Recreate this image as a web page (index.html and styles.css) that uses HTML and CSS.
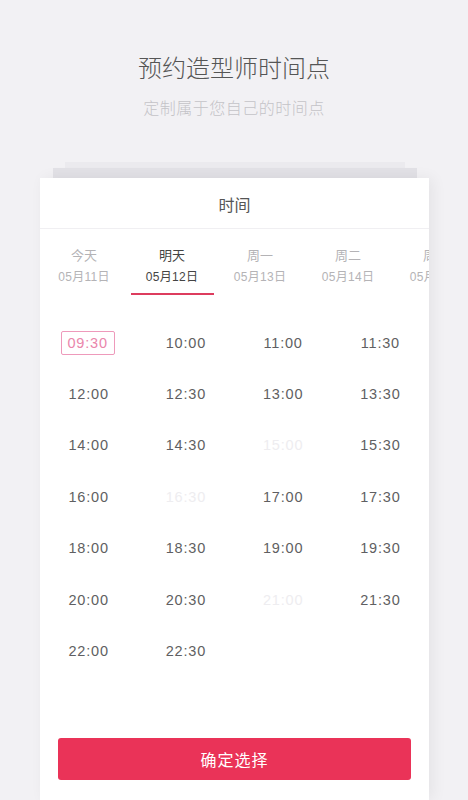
FILE: index.html
```html
<!DOCTYPE html>
<html lang="zh-CN">
<head>
  <meta charset="UTF-8">
  <meta name="viewport" content="width=device-width, initial-scale=1.0">
  <title>预约造型师时间点</title>
  <link rel="stylesheet" href="styles.css">
</head>
<body>
  <div class="page">
    <h1 class="title">预约造型师时间点</h1>
    <p class="subtitle">定制属于您自己的时间点</p>

    <div class="stack">
      <div class="layer layer-back"></div>
      <div class="layer layer-mid"></div>
      <div class="card">
        <div class="card-head">时间</div>

        <div class="tabs">
          <div class="tab"><span class="day">今天</span><span class="date">05月11日</span></div>
          <div class="tab active"><span class="day">明天</span><span class="date">05月12日</span></div>
          <div class="tab"><span class="day">周一</span><span class="date">05月13日</span></div>
          <div class="tab"><span class="day">周二</span><span class="date">05月14日</span></div>
          <div class="tab"><span class="day">周三</span><span class="date">05月15日</span></div>
        </div>

        <div class="slots">
          <div class="slot"><span class="selected">09:30</span></div>
          <div class="slot">10:00</div>
          <div class="slot">11:00</div>
          <div class="slot">11:30</div>
          <div class="slot">12:00</div>
          <div class="slot">12:30</div>
          <div class="slot">13:00</div>
          <div class="slot">13:30</div>
          <div class="slot">14:00</div>
          <div class="slot">14:30</div>
          <div class="slot disabled">15:00</div>
          <div class="slot">15:30</div>
          <div class="slot">16:00</div>
          <div class="slot disabled">16:30</div>
          <div class="slot">17:00</div>
          <div class="slot">17:30</div>
          <div class="slot">18:00</div>
          <div class="slot">18:30</div>
          <div class="slot">19:00</div>
          <div class="slot">19:30</div>
          <div class="slot">20:00</div>
          <div class="slot">20:30</div>
          <div class="slot disabled">21:00</div>
          <div class="slot">21:30</div>
          <div class="slot">22:00</div>
          <div class="slot">22:30</div>
        </div>

        <button class="confirm">确定选择</button>
      </div>
    </div>
  </div>
</body>
</html>
```

FILE: styles.css
```css
body {
  margin: 0;
  padding: 0;
  background: #f2f1f4;
  font-family: "Liberation Sans", "Noto Sans CJK SC", sans-serif;
  color: #555;
  height: 800px;
  overflow: hidden;
}

.page {
  display: flex;
  flex-direction: column;
  align-items: center;
}

.title {
  margin: 52px 0 0;
  font-family: "Noto Sans CJK SC", sans-serif;
  font-size: 24px;
  font-weight: 300;
  line-height: 30px;
  color: #555;
}

.subtitle {
  margin: 14px 0 0;
  font-family: "Noto Sans CJK SC", sans-serif;
  font-size: 16px;
  font-weight: 300;
  letter-spacing: 0.5px;
  line-height: 22px;
  color: #c4c3c7;
}

.stack {
  margin-top: 44px;
  width: 389px;
  margin-left: 1px;
  display: flex;
  flex-direction: column;
  align-items: center;
}

.layer {
  height: 6px;
}

.layer-back {
  width: 340px;
  background: #ebeaee;
}

.layer-mid {
  width: 364px;
  height: 10px;
  background: #e2e1e6;
}

.card {
  width: 389px;
  height: 622px;
  background: #fff;
  box-shadow: 4px 0 14px rgba(0, 0, 0, 0.06);
  overflow: hidden;
  display: flex;
  flex-direction: column;
}

.card-head {
  height: 50px;
  line-height: 52px;
  text-align: center;
  font-family: "Noto Sans CJK SC", sans-serif;
  font-size: 16px;
  color: #555;
  border-bottom: 1px solid #f0eff2;
}

.tabs {
  display: flex;
  height: 67px;
  white-space: nowrap;
}

.tab {
  flex: 0 0 88px;
  display: flex;
  flex-direction: column;
  align-items: center;
  padding-top: 17px;
  box-sizing: border-box;
  color: #b4b3b6;
  position: relative;
}

.tab .day {
  font-family: "Noto Sans CJK SC", sans-serif;
  font-size: 13px;
  line-height: 18px;
}

.tab .date {
  margin-top: 5px;
  font-size: 12px;
  line-height: 16px;
  letter-spacing: 0.3px;
  font-family: "Liberation Sans", "Noto Sans CJK SC", sans-serif;
}

.tab.active {
  color: #444;
}

.tab.active::after {
  content: "";
  position: absolute;
  left: 3px;
  right: 2px;
  bottom: 1px;
  height: 2px;
  background: #dd3c5e;
}

.slots {
  display: grid;
  grid-template-columns: repeat(4, 1fr);
  grid-auto-rows: 51.4px;
  margin-top: 21px;
}

.slot {
  display: flex;
  align-items: center;
  justify-content: center;
  font-size: 14.5px;
  letter-spacing: 0.8px;
  color: #5f5f62;
}

.slot.disabled {
  color: #eeedf0;
}

.slot .selected {
  display: inline-block;
  width: 52px;
  height: 22px;
  line-height: 22px;
  text-align: center;
  border: 1px solid #ee9abb;
  border-radius: 2px;
  color: #ea86ab;
  margin-right: 2px;
}

.confirm {
  margin: auto 18px 20px;
  height: 42px;
  border: none;
  border-radius: 3px;
  background: #ea3358;
  color: #fff;
  font-family: "Noto Sans CJK SC", sans-serif;
  font-size: 16px;
  letter-spacing: 1px;
}
```
